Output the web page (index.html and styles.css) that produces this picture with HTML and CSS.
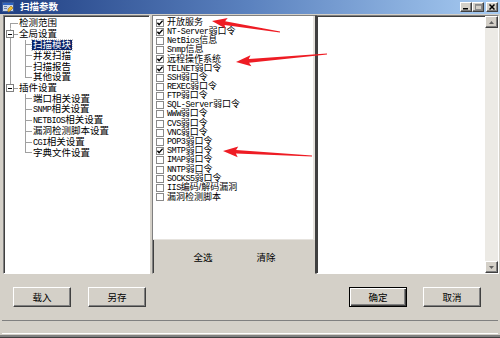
FILE: index.html
```html
<!DOCTYPE html>
<html lang="zh-CN">

<head>
    <meta charset="UTF-8">
    <title>扫描参数</title>
    <link rel="stylesheet" href="styles.css">
</head>

<body>
    <div class="window">
        <div class="titlebar">
            <svg class="app-icon" width="12" height="12" viewBox="0 0 12 12">
                <rect x="0.5" y="1.5" width="11" height="9" fill="#c9d6ea" stroke="#3b5a94" />
                <rect x="1" y="2" width="10" height="2" fill="#2f63c0" />
                <rect x="2" y="5" width="3" height="1" fill="#6a7fa8" />
                <rect x="2" y="7" width="3" height="1" fill="#6a7fa8" />
                <path d="M6 11 L6 8 L9 5 L11 7 L8 10 Z" fill="#f2c230" stroke="#a26a10" stroke-width="0.6" />
            </svg>
            <span class="title">扫描参数</span>
            <div class="caption-btns">
                <span class="cap-btn"><svg width="6" height="6" viewBox="0 0 6 6"><rect x="0" y="4" width="5" height="1.5" fill="#000" /></svg></span>
                <span class="cap-btn"><svg width="7" height="6" viewBox="0 0 7 6"><rect x="0.5" y="0.5" width="6" height="5" fill="none" stroke="#8a8a8a" /><rect x="0.5" y="0.5" width="6" height="1.3" fill="#8a8a8a" /></svg></span>
                <span class="cap-btn close"><svg width="6" height="6" viewBox="0 0 6 6"><path d="M0.5 0.5 L5.5 5.5 M5.5 0.5 L0.5 5.5" stroke="#000" stroke-width="1.5" /></svg></span>
            </div>
        </div>

        <div class="main">
            <div class="tree">
                <div class="row"><span class="c r c-first"></span><span class="lbl">检测范围</span></div>
                <div class="row"><span class="c r c-box both"><span class="tog"></span></span><span class="lbl">全局设置</span></div>
                <div class="row"><span class="c r c-v"></span><span class="c k c-tee"></span><span class="lbl sel">扫描模块</span></div>
                <div class="row"><span class="c r c-v"></span><span class="c k c-tee"></span><span class="lbl">并发扫描</span></div>
                <div class="row"><span class="c r c-v"></span><span class="c k c-tee"></span><span class="lbl">扫描报告</span></div>
                <div class="row"><span class="c r c-v"></span><span class="c k c-end"></span><span class="lbl">其他设置</span></div>
                <div class="row"><span class="c r c-box"><span class="tog"></span></span><span class="lbl">插件设置</span></div>
                <div class="row"><span class="c r"></span><span class="c k c-tee"></span><span class="lbl">端口相关设置</span></div>
                <div class="row"><span class="c r"></span><span class="c k c-tee"></span><span class="lbl"><span class="en">SNMP</span>相关设置</span></div>
                <div class="row"><span class="c r"></span><span class="c k c-tee"></span><span class="lbl"><span class="en">NETBIOS</span>相关设置</span></div>
                <div class="row"><span class="c r"></span><span class="c k c-tee"></span><span class="lbl">漏洞检测脚本设置</span></div>
                <div class="row"><span class="c r"></span><span class="c k c-tee"></span><span class="lbl"><span class="en">CGI</span>相关设置</span></div>
                <div class="row"><span class="c r"></span><span class="c k c-end"></span><span class="lbl">字典文件设置</span></div>
            </div>

            <div class="mid">
                <ul class="checks">
                    <li><span class="box"><svg width="6" height="6" viewBox="0 0 6 6"><path d="M0.4 2.8 L2.1 4.6 L5.6 0.7" fill="none" stroke="#000" stroke-width="1.4" /></svg></span><span class="txt">开放服务</span></li>
                    <li><span class="box"><svg width="6" height="6" viewBox="0 0 6 6"><path d="M0.4 2.8 L2.1 4.6 L5.6 0.7" fill="none" stroke="#000" stroke-width="1.4" /></svg></span><span class="txt"><span class="en">NT-Server</span>弱口令</span></li>
                    <li><span class="box"></span><span class="txt"><span class="en">NetBios</span>信息</span></li>
                    <li><span class="box"></span><span class="txt"><span class="en">Snmp</span>信息</span></li>
                    <li><span class="box"><svg width="6" height="6" viewBox="0 0 6 6"><path d="M0.4 2.8 L2.1 4.6 L5.6 0.7" fill="none" stroke="#000" stroke-width="1.4" /></svg></span><span class="txt">远程操作系统</span></li>
                    <li><span class="box"><svg width="6" height="6" viewBox="0 0 6 6"><path d="M0.4 2.8 L2.1 4.6 L5.6 0.7" fill="none" stroke="#000" stroke-width="1.4" /></svg></span><span class="txt"><span class="en">TELNET</span>弱口令</span></li>
                    <li><span class="box"></span><span class="txt"><span class="en">SSH</span>弱口令</span></li>
                    <li><span class="box"></span><span class="txt"><span class="en">REXEC</span>弱口令</span></li>
                    <li><span class="box"></span><span class="txt"><span class="en">FTP</span>弱口令</span></li>
                    <li><span class="box"></span><span class="txt"><span class="en">SQL-Server</span>弱口令</span></li>
                    <li><span class="box"></span><span class="txt"><span class="en">WWW</span>弱口令</span></li>
                    <li><span class="box"></span><span class="txt"><span class="en">CVS</span>弱口令</span></li>
                    <li><span class="box"></span><span class="txt"><span class="en">VNC</span>弱口令</span></li>
                    <li><span class="box"></span><span class="txt"><span class="en">POP3</span>弱口令</span></li>
                    <li><span class="box"><svg width="6" height="6" viewBox="0 0 6 6"><path d="M0.4 2.8 L2.1 4.6 L5.6 0.7" fill="none" stroke="#000" stroke-width="1.4" /></svg></span><span class="txt"><span class="en">SMTP</span>弱口令</span></li>
                    <li><span class="box"></span><span class="txt"><span class="en">IMAP</span>弱口令</span></li>
                    <li><span class="box"></span><span class="txt"><span class="en">NNTP</span>弱口令</span></li>
                    <li><span class="box"></span><span class="txt"><span class="en">SOCKS5</span>弱口令</span></li>
                    <li><span class="box"></span><span class="txt"><span class="en">IIS</span>编码/解码漏洞</span></li>
                    <li><span class="box"></span><span class="txt">漏洞检测脚本</span></li>
                </ul>
                <div class="mid-btns">
                    <button class="flat">全选</button>
                    <button class="flat">清除</button>
                </div>
            </div>

            <div class="detail">
                <div class="detail-body"></div>
                <div class="vscroll">
                    <span class="sb-btn"><svg width="5" height="3" viewBox="0 0 5 3"><path d="M0 3 L2.5 0 L5 3 Z" fill="#606060" /></svg></span>
                    <span class="sb-track"></span>
                    <span class="sb-btn"><svg width="5" height="3" viewBox="0 0 5 3"><path d="M0 0 L5 0 L2.5 3 Z" fill="#606060" /></svg></span>
                </div>
            </div>
        </div>

        <div class="actions">
            <button class="btn">载入</button>
            <button class="btn save">另存</button>
            <span class="spacer"></span>
            <button class="btn default">确定</button>
            <button class="btn cancel">取消</button>
        </div>

        <div class="status"></div>

        <!-- annotation arrows drawn over the dialog -->
        <svg class="arrows" width="500" height="338" viewBox="0 0 500 338">
            <polygon points="212,21 227.7,18 225.1,21.3 280.1,31.5 279.9,32.5 224.5,24.9 225.9,28.8" />
            <polygon points="236,62 250.5,55.2 248.8,59.1 327,53.5 327,54.5 249.1,62.7 251.4,66.2" />
            <polygon points="223,151 238.3,146.4 236.1,149.9 312,155.5 312,156.5 235.9,153.5 237.7,157.3" />
        </svg>
    </div>
</body>

</html>
```

FILE: styles.css
```css
body {
    margin: 0;
    width: 500px;
    height: 338px;
    overflow: hidden;
    background-color: #d4d0c8;
    font-family: "Liberation Sans", "Noto Sans CJK SC", sans-serif;
    font-size: 9px;
    color: #000;
}

.window {
    position: relative;
    height: 338px;
    display: flex;
    flex-direction: column;
    box-shadow: inset 0 -1px #404040, inset 0 -3px #808080;
}

/* title bar */
.titlebar {
    height: 14px;
    display: flex;
    align-items: center;
    padding: 0 2px;
    background: linear-gradient(to right, #1f3e82, #5b82bf 50%, #a8ccf2);
    color: #fff;
}

.app-icon {
    flex: none;
}

.title {
    margin-left: 6px;
    font-size: 9.5px;
    font-weight: bold;
    line-height: 14px;
}

.caption-btns {
    margin-left: auto;
    display: flex;
}

.cap-btn {
    width: 12px;
    height: 10px;
    box-sizing: border-box;
    background-color: #d4d0c8;
    border: 1px solid;
    border-color: #fff #404040 #404040 #fff;
    box-shadow: inset -1px -1px #808080;
    display: flex;
    align-items: center;
    justify-content: center;
}

.cap-btn.close {
    margin-left: 2px;
}

/* panels */
.main {
    height: 259px;
    margin-top: 1px;
    display: flex;
    padding: 0 1px 0 3px;
}

.tree,
.mid,
.detail {
    box-sizing: border-box;
    border: 1px solid;
    border-color: #808080 #fff #fff #808080;
    box-shadow: inset 1px 1px #404040;
}

.tree {
    width: 147px;
    background-color: #fff;
    padding: 2px 0 0 1px;
    font-size: 9.5px;
}

.row {
    height: 10.8px;
    display: flex;
    align-items: center;
    white-space: nowrap;
}

.c {
    flex: none;
    height: 100%;
    background-repeat: no-repeat;
}

.r {
    width: 13px;
}

.k {
    width: 14px;
}

.c-first {
    background-image: linear-gradient(#a0a0a0, #a0a0a0), linear-gradient(#a0a0a0, #a0a0a0);
    background-position: 5px 100%, 5px 50%;
    background-size: 1px 50%, 8px 1px;
}

.c-v {
    background-image: linear-gradient(#a0a0a0, #a0a0a0);
    background-position: 5px 0;
    background-size: 1px 100%;
}

.c-tee {
    background-image: linear-gradient(#a0a0a0, #a0a0a0), linear-gradient(#a0a0a0, #a0a0a0);
    background-position: 7px 0, 7px 50%;
    background-size: 1px 100%, 7px 1px;
}

.c-end {
    background-image: linear-gradient(#a0a0a0, #a0a0a0), linear-gradient(#a0a0a0, #a0a0a0);
    background-position: 7px 0, 7px 50%;
    background-size: 1px 50%, 7px 1px;
}

.c-box {
    display: flex;
    align-items: center;
    background-image: linear-gradient(#a0a0a0, #a0a0a0), linear-gradient(#a0a0a0, #a0a0a0);
    background-position: 5px 0, 100% 50%;
    background-size: 1px 50%, 4px 1px;
}

.c-box.both {
    background-size: 1px 100%, 4px 1px;
}

.tog {
    width: 8px;
    height: 8px;
    margin-left: 1px;
    box-sizing: border-box;
    border: 1px solid #808080;
    background: #fff linear-gradient(#000, #000) no-repeat center / 4px 1px;
}

.lbl {
    line-height: 10px;
    padding: 0 1px;
}

.lbl.sel {
    background-color: #0a246a;
    color: #fff;
    outline: 1px dotted #c8c8c8;
}

.en {
    font-family: "Liberation Mono", monospace;
    font-size: 8.5px;
    letter-spacing: -0.5px;
}

.mid {
    width: 164px;
    margin-left: 2px;
    display: flex;
    flex-direction: column;
    border-color: #808080 #404040 #d4d0c8 #808080;
}

.checks {
    flex: none;
    height: 221px;
    margin: 0;
    padding: 2px 0 0 3px;
    list-style: none;
    background-color: #fff;
    border-right: 2px solid #e6e3de;
    border-bottom: 1px solid #e6e3de;
}

.checks li {
    height: 9.2px;
    display: flex;
    align-items: center;
    gap: 3px;
    white-space: nowrap;
}

.txt {
    line-height: 9px;
}

.box {
    flex: none;
    width: 8px;
    height: 8px;
    box-sizing: border-box;
    border: 1px solid #8a8a8a;
    background-color: #fff;
    display: flex;
    align-items: center;
    justify-content: center;
}

.mid-btns {
    flex: 1;
    display: flex;
    justify-content: center;
    align-items: center;
    gap: 5px;
    padding-left: 1px;
}

.flat {
    width: 58px;
    height: 20px;
    padding: 0;
    border: none;
    background: none;
    font-family: inherit;
    font-size: 9.5px;
    color: #000;
}

.detail {
    width: 183px;
    display: flex;
    background-color: #fff;
    border-left-color: #404040;
}

.detail-body {
    flex: 1;
}

.vscroll {
    width: 13px;
    display: flex;
    flex-direction: column;
    background-color: #eceae5;
}

.sb-btn {
    height: 12px;
    box-sizing: border-box;
    background-color: #d4d0c8;
    border: 1px solid;
    border-color: #fff #404040 #404040 #fff;
    box-shadow: inset -1px -1px #808080;
    display: flex;
    align-items: center;
    justify-content: center;
}

.sb-track {
    flex: 1;
}

/* bottom buttons */
.actions {
    height: 46px;
    display: flex;
    align-items: center;
    padding: 0 19px 0 13px;
}

.btn {
    width: 58px;
    height: 20px;
    padding: 0;
    box-sizing: border-box;
    background-color: #d4d0c8;
    border: 1px solid;
    border-color: #fff #404040 #404040 #fff;
    box-shadow: inset -1px -1px #808080;
    font-family: inherit;
    font-size: 9.5px;
    color: #000;
}

.btn.save {
    margin-left: 17px;
}

.btn.default {
    border-color: #000;
    box-shadow: inset 1px 1px #fff, inset -1px -1px #404040, inset -2px -2px #808080;
}

.btn.cancel {
    margin-left: 16px;
}

.spacer {
    flex: 1;
}

.status {
    height: 12px;
    margin: 0 2px;
    border-top: 1px solid #808080;
    border-bottom: 1px solid #fff;
}

.arrows {
    position: absolute;
    left: 0;
    top: 0;
    pointer-events: none;
    fill: #ee1c24;
}
```
